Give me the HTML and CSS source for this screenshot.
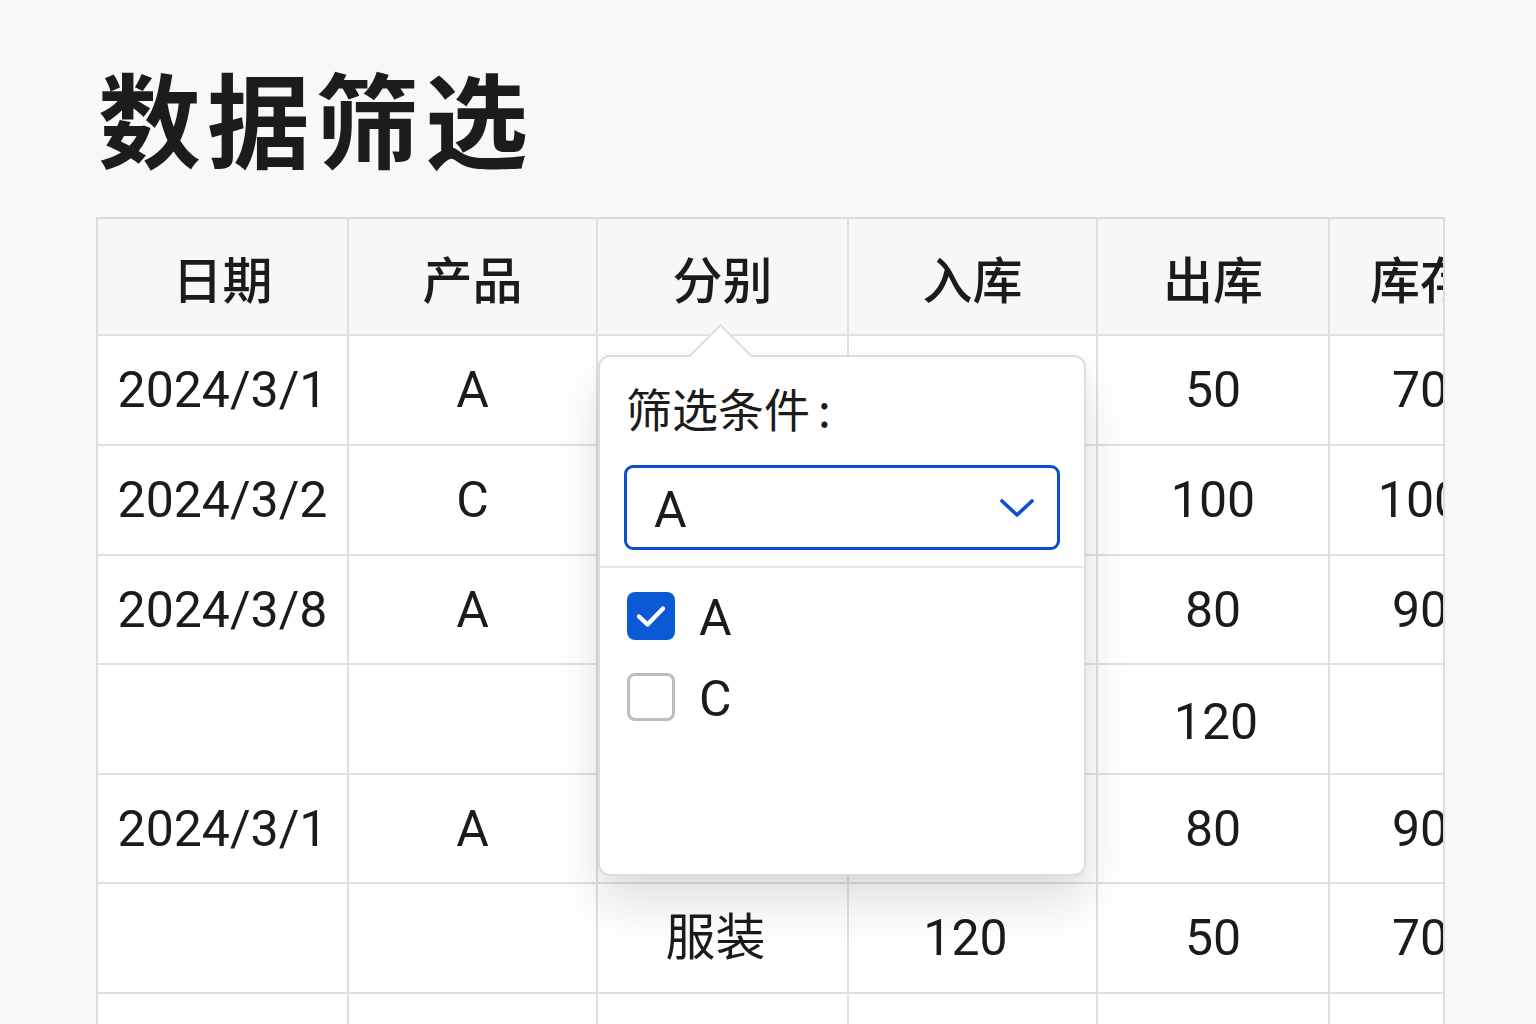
FILE: index.html
```html
<!DOCTYPE html>
<html lang="zh-CN">
<head>
<meta charset="utf-8">
<title>数据筛选</title>
<link rel="stylesheet" href="styles.css">
</head>
<body>
<main class="page">
  <h1 class="title">数据筛选</h1>
  <div class="table-area">
    <div class="table-wrap">
      <div class="grid">
        <div class="cell head">日期</div>
        <div class="cell head">产品</div>
        <div class="cell head">分别</div>
        <div class="cell head">入库</div>
        <div class="cell head">出库</div>
        <div class="cell head">库存</div>

        <div class="cell">2024/3/1</div>
        <div class="cell">A</div>
        <div class="cell">服装</div>
        <div class="cell">120</div>
        <div class="cell">50</div>
        <div class="cell">70</div>

        <div class="cell">2024/3/2</div>
        <div class="cell">C</div>
        <div class="cell">鞋类</div>
        <div class="cell">200</div>
        <div class="cell">100</div>
        <div class="cell">100</div>

        <div class="cell">2024/3/8</div>
        <div class="cell">A</div>
        <div class="cell">服装</div>
        <div class="cell">170</div>
        <div class="cell">80</div>
        <div class="cell">90</div>

        <div class="cell"></div>
        <div class="cell"></div>
        <div class="cell"></div>
        <div class="cell"></div>
        <div class="cell low">120</div>
        <div class="cell"></div>

        <div class="cell">2024/3/1</div>
        <div class="cell">A</div>
        <div class="cell">服装</div>
        <div class="cell">170</div>
        <div class="cell">80</div>
        <div class="cell">90</div>

        <div class="cell"></div>
        <div class="cell"></div>
        <div class="cell shift">服装</div>
        <div class="cell shift">120</div>
        <div class="cell">50</div>
        <div class="cell">70</div>

        <div class="cell"></div>
        <div class="cell"></div>
        <div class="cell"></div>
        <div class="cell"></div>
        <div class="cell"></div>
        <div class="cell"></div>
      </div>
    </div>

    <div class="popup">
      <span class="arrow"></span>
      <div class="popup-top">
        <div class="popup-title">筛选条件<span class="colon">:</span></div>
        <div class="select">
          <span class="select-value">A</span>
          <svg class="chevron" width="36" height="22" viewBox="0 0 36 22" aria-hidden="true">
            <polyline points="3,4 18,18 33,4" fill="none" stroke="#0b4fd1" stroke-width="3.6" stroke-linecap="round" stroke-linejoin="round"/>
          </svg>
        </div>
      </div>
      <div class="options">
        <label class="option">
          <span class="box checked">
            <svg width="48" height="48" viewBox="0 0 48 48" aria-hidden="true">
              <polyline points="12,24.5 20.5,32.5 36,16.5" fill="none" stroke="#ffffff" stroke-width="4.4" stroke-linecap="round" stroke-linejoin="round"/>
            </svg>
          </span>
          <span class="option-text">A</span>
        </label>
        <label class="option">
          <span class="box"></span>
          <span class="option-text">C</span>
        </label>
      </div>
    </div>
  </div>
</main>
</body>
</html>
```

FILE: styles.css
```css
* { box-sizing: border-box; }

html, body {
  margin: 0;
  padding: 0;
  height: 100%;
  overflow: hidden;
  background: #f8f8f8;
}

body {
  font-family: Roboto, "Noto Sans CJK SC", sans-serif;
  color: #1b1b1b;
}

.page {
  padding: 65px 0 0 96px;
}

.title {
  margin: 0 0 49px 2px;
  font-family: "Noto Sans CJK SC", sans-serif;
  font-size: 103px;
  line-height: 103px;
  font-weight: 700;
  letter-spacing: 6px;
  color: #1c1c1c;
}

.table-area {
  position: relative;
  width: 1349px;
}

.table-wrap {
  width: 1349px;
  height: 900px;
  overflow: hidden;
  border: 2px solid #dcdcdc;
  border-bottom: none;
  background: #ffffff;
}

.grid {
  display: grid;
  grid-template-columns: 251px 249px 251px 249px 232px 182px;
  grid-template-rows: 117px 110px 110px 109px 110px 109px 110px 110px;
  width: 1414px;
}

.cell {
  display: flex;
  align-items: center;
  justify-content: center;
  border-right: 2px solid #e0e0e0;
  border-bottom: 2px solid #e0e0e0;
  background: #ffffff;
  font-size: 50px;
  line-height: 1;
  color: #1b1b1b;
  white-space: nowrap;
}

.cell.head {
  background: #f7f7f7;
  font-family: "Noto Sans CJK SC", sans-serif;
  font-size: 50px;
  font-weight: 500;
}

.cell.low {
  padding-top: 6px;
  padding-left: 6px;
}

.cell.shift {
  padding-right: 14px;
}

.popup {
  position: absolute;
  left: 502px;
  top: 138px;
  width: 488px;
  height: 521px;
  background: #ffffff;
  border: 2px solid #dddddd;
  border-radius: 12px;
  box-shadow: 0 28px 50px rgba(0, 0, 0, 0.12), 0 4px 12px rgba(0, 0, 0, 0.04);
}

.arrow {
  position: absolute;
  left: 98px;
  top: -24px;
  width: 45px;
  height: 45px;
  background: #ffffff;
  border-top: 2px solid #dddddd;
  border-left: 2px solid #dddddd;
  transform: rotate(45deg);
}

.popup-top {
  padding: 24px 24px 16px 24px;
  border-bottom: 2px solid #e6e6e6;
}

.popup-title {
  font-family: "Noto Sans CJK SC", sans-serif;
  font-size: 46px;
  line-height: 53px;
  padding-left: 2px;
  color: #1b1b1b;
}

.colon {
  margin-left: 8px;
}

.select {
  margin-top: 31px;
  height: 85px;
  border: 3px solid #0b4fd1;
  border-radius: 9px;
  display: flex;
  align-items: center;
  justify-content: space-between;
  padding: 4px 22px 0 27px;
}

.select-value {
  font-size: 50px;
  line-height: 1;
}

.chevron {
  display: block;
  margin-top: -4px;
}

.options {
  padding: 21px 24px 0 27px;
  display: flex;
  flex-direction: column;
  gap: 27px;
}

.option {
  display: flex;
  align-items: center;
  gap: 24px;
}

.box {
  width: 48px;
  height: 48px;
  border-radius: 8px;
  border: 3px solid #bdbdbd;
  background: #ffffff;
  display: flex;
  align-items: center;
  justify-content: center;
}

.box.checked {
  background: #0a5ad8;
  border: none;
}

.option-text {
  font-size: 50px;
  line-height: 1;
  padding-top: 4px;
}
```
